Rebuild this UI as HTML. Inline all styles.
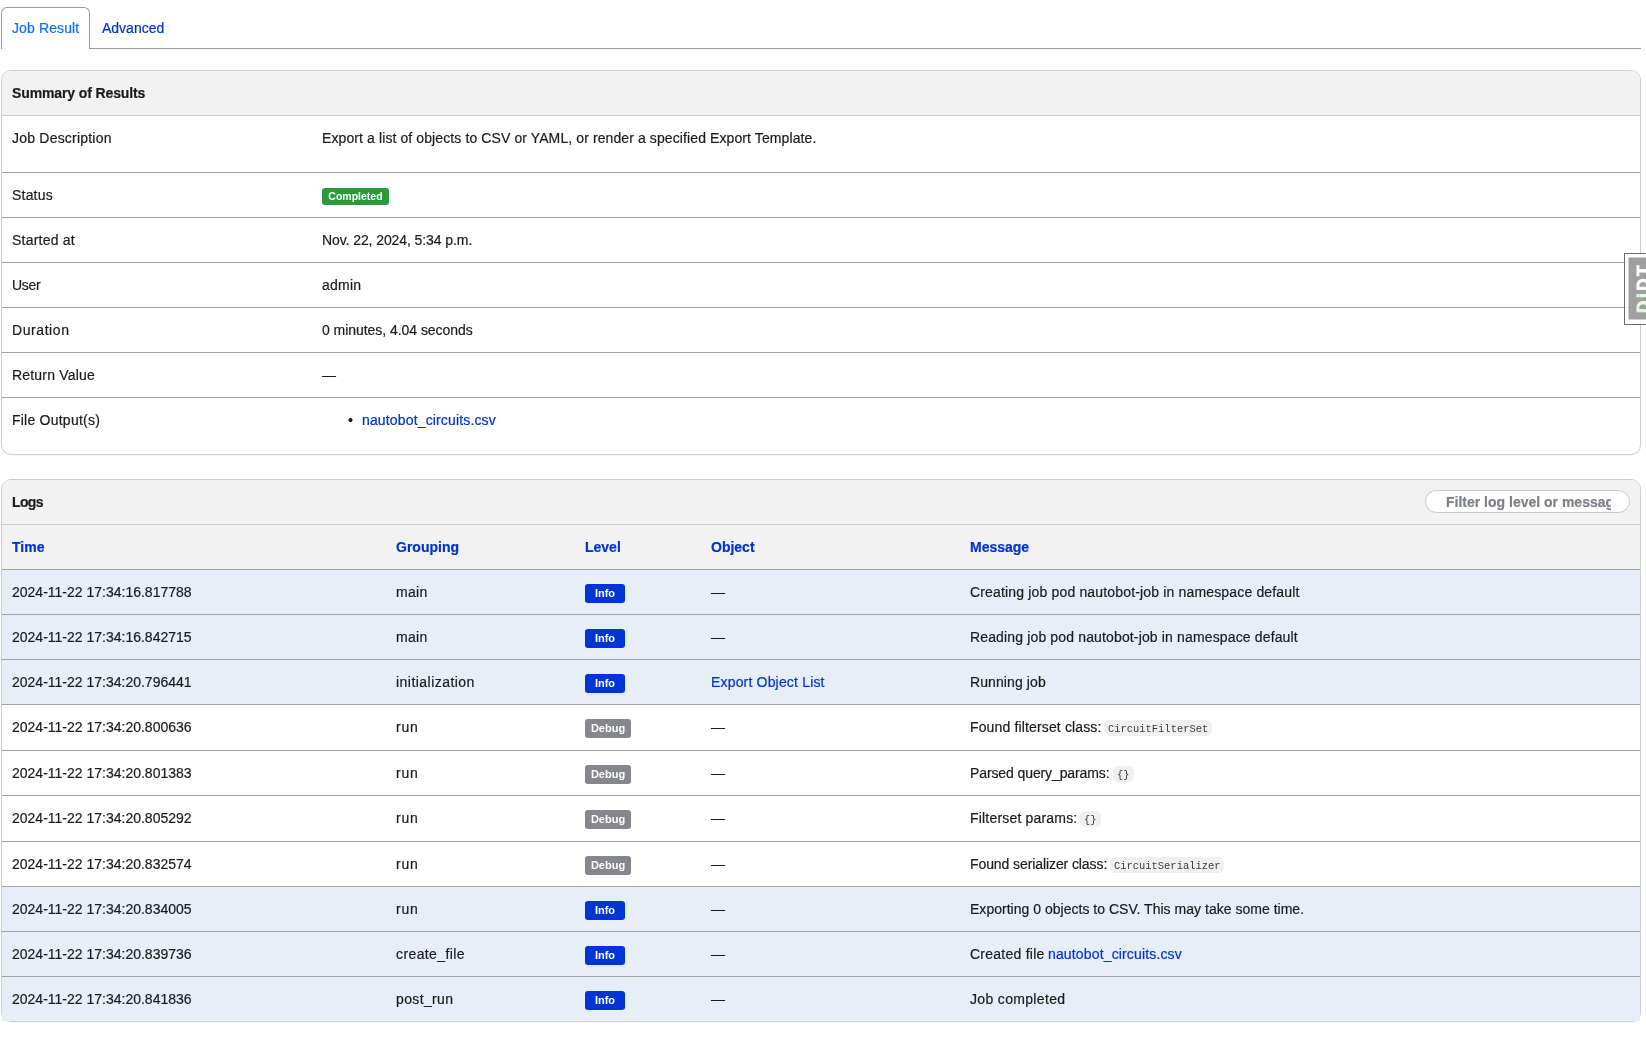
<!DOCTYPE html>
<html><head><meta charset="utf-8"><title>Job Result</title><style>
*{box-sizing:border-box}
html,body{margin:0;padding:0;background:#fff}
body{width:1646px;height:1044px;overflow:hidden;position:relative;font-family:"Liberation Sans",sans-serif;font-size:14px;line-height:20px;color:#1b1b1b}
a{color:#0033cc;text-decoration:none}
.tab{position:absolute;left:1px;top:7px;width:89px;height:42px;border:1px solid #9a9a9a;border-bottom:0;border-radius:6px 6px 0 0;background:#fff}
.tabline{position:absolute;left:89px;top:48px;width:1552px;height:1px;background:#9a9a9a}
.t{position:absolute;white-space:pre;-webkit-text-stroke:0.2px currentColor}
.aa{position:absolute;left:0;top:0;width:1646px;height:1044px;will-change:transform}
.panel{position:absolute;left:1px;width:1640px;border:1px solid #cfcfcf;border-radius:10px;overflow:hidden;background:#fff;box-shadow:0 1px 1px rgba(0,0,0,.05)}
.ph{position:absolute;left:0;top:0;width:100%;height:45px;background:#f2f2f2;border-bottom:1px solid #cfcfcf}
.row{position:absolute;left:0;width:100%}
.rl{position:absolute;left:0;width:100%;height:1px;background:#a3a3a3}
.badge{position:absolute;font-weight:bold;color:#fff;border-radius:3px;text-align:center;white-space:pre}
.code{position:absolute;font-family:"Liberation Mono",monospace;font-size:10.45px;line-height:15px;padding:2px 4px 0 4px;height:16px;background:#f0f0f0;border-radius:5px;color:#3a3a3a;white-space:pre}
.djdt{position:absolute;left:1623.5px;top:252.5px;width:40px;height:72.5px;border:1.5px solid #6a6a6a;background:rgba(255,255,255,.8)}
</style></head>
<body><div class="aa">
<div class="tab"></div><div class="tabline"></div><div class="t" style="left:12px;top:18px;letter-spacing:0.111px;color:#0a72ff;">Job Result</div><div class="t" style="left:102px;top:18px;"><a>Advanced</a></div><div class="panel" style="top:70px;height:385px"><div class="ph"></div><div class="t" style="left:10px;top:12px;font-weight:bold;letter-spacing:-0.118px;">Summary of Results</div><div class="t" style="left:10px;top:57px;letter-spacing:0.214px;">Job Description</div><div class="t" style="left:320px;top:57px;letter-spacing:0.103px;">Export a list of objects to CSV or YAML, or render a specified Export Template.</div><div class="t" style="left:10px;top:114px;letter-spacing:0.200px;">Status</div><div class="rl" style="top:101px"></div><div class="t" style="left:10px;top:159px;letter-spacing:0.222px;">Started at</div><div class="t" style="left:320px;top:159px;letter-spacing:-0.087px;">Nov. 22, 2024, 5:34 p.m.</div><div class="rl" style="top:146px"></div><div class="t" style="left:10px;top:204px;letter-spacing:-0.333px;">User</div><div class="t" style="left:320px;top:204px;letter-spacing:0.250px;">admin</div><div class="rl" style="top:191px"></div><div class="t" style="left:10px;top:249px;letter-spacing:0.571px;">Duration</div><div class="t" style="left:320px;top:249px;letter-spacing:-0.045px;">0 minutes, 4.04 seconds</div><div class="rl" style="top:236px"></div><div class="t" style="left:10px;top:294px;letter-spacing:0.182px;">Return Value</div><div class="t" style="left:320px;top:294px;">&mdash;</div><div class="rl" style="top:281px"></div><div class="t" style="left:10px;top:339px;letter-spacing:0.231px;">File Output(s)</div><div class="rl" style="top:326px"></div><div class="badge" style="left:320px;top:117px;width:67px;height:17px;line-height:17px;font-size:10.5px;background:#2a9a3c">Completed</div><div class="t" style="left:346px;top:339px">&bull;</div><div class="t" style="left:360px;top:339px;letter-spacing:0.150px;"><a>nautobot_circuits.csv</a></div></div><div class="panel" style="top:479px;height:543px;overflow:visible"><div class="ph" style="border-radius:9px 9px 0 0"></div><div class="t" style="left:10px;top:12px;font-weight:bold;letter-spacing:-0.667px;">Logs</div><div style="position:absolute;left:1423px;top:10px;width:205px;height:23px;border:1px solid #c8c8c8;border-radius:12px;background:#fff"></div><div class="t" style="left:1444px;top:12px;width:165px;overflow:hidden;font-weight:bold;color:#7d8087">Filter log level or message</div><div class="row" style="top:45px;height:44px;background:#f2f2f2"></div><div class="t" style="left:10px;top:57px;font-weight:bold;"><a>Time</a></div><div class="t" style="left:394px;top:57px;font-weight:bold;"><a>Grouping</a></div><div class="t" style="left:583px;top:57px;font-weight:bold;"><a>Level</a></div><div class="t" style="left:709px;top:57px;font-weight:bold;"><a>Object</a></div><div class="t" style="left:968px;top:57px;font-weight:bold;"><a>Message</a></div><div class="row" style="top:89px;height:46px;background:#e7eef8;border-top:1px solid #a3a3a3"></div><div class="t" style="left:10px;top:102px;">2024-11-22 17:34:16.817788</div><div class="t" style="left:394px;top:102px;letter-spacing:0.333px;">main</div><div class="badge" style="left:583px;top:104px;width:40px;height:19px;line-height:19px;font-size:11px;background:#0035d4">Info</div><div class="t" style="left:709px;top:102px;">&mdash;</div><div class="t" style="left:968px;top:102px;letter-spacing:0.163px;">Creating job pod nautobot-job in namespace default</div><div class="row" style="top:134px;height:46px;background:#e7eef8;border-top:1px solid #a3a3a3"></div><div class="t" style="left:10px;top:147px;">2024-11-22 17:34:16.842715</div><div class="t" style="left:394px;top:147px;letter-spacing:0.333px;">main</div><div class="badge" style="left:583px;top:149px;width:40px;height:19px;line-height:19px;font-size:11px;background:#0035d4">Info</div><div class="t" style="left:709px;top:147px;">&mdash;</div><div class="t" style="left:968px;top:147px;letter-spacing:0.146px;">Reading job pod nautobot-job in namespace default</div><div class="row" style="top:179px;height:46px;background:#e7eef8;border-top:1px solid #a3a3a3"></div><div class="t" style="left:10px;top:192px;">2024-11-22 17:34:20.796441</div><div class="t" style="left:394px;top:192px;letter-spacing:0.462px;">initialization</div><div class="badge" style="left:583px;top:194px;width:40px;height:19px;line-height:19px;font-size:11px;background:#0035d4">Info</div><div class="t" style="left:709px;top:192px;letter-spacing:0.176px;"><a>Export Object List</a></div><div class="t" style="left:968px;top:192px;letter-spacing:0.100px;">Running job</div><div class="row" style="top:224px;height:47px;background:#fff;border-top:1px solid #a3a3a3"></div><div class="t" style="left:10px;top:237px;">2024-11-22 17:34:20.800636</div><div class="t" style="left:394px;top:237px;letter-spacing:0.750px;">run</div><div class="badge" style="left:583px;top:239px;width:46px;height:19px;line-height:19px;font-size:11px;background:#85878c">Debug</div><div class="t" style="left:709px;top:237px;">&mdash;</div><div class="t" style="left:968px;top:237px;letter-spacing:0.143px;">Found filterset class:</div><div class="code" style="left:1102px;top:240px">CircuitFilterSet</div><div class="row" style="top:270px;height:46px;background:#fff;border-top:1px solid #a3a3a3"></div><div class="t" style="left:10px;top:283px;">2024-11-22 17:34:20.801383</div><div class="t" style="left:394px;top:283px;letter-spacing:0.750px;">run</div><div class="badge" style="left:583px;top:285px;width:46px;height:19px;line-height:19px;font-size:11px;background:#85878c">Debug</div><div class="t" style="left:709px;top:283px;">&mdash;</div><div class="t" style="left:968px;top:283px;letter-spacing:-0.105px;">Parsed query_params:</div><div class="code" style="left:1111px;top:286px">{}</div><div class="row" style="top:315px;height:47px;background:#fff;border-top:1px solid #a3a3a3"></div><div class="t" style="left:10px;top:328px;">2024-11-22 17:34:20.805292</div><div class="t" style="left:394px;top:328px;letter-spacing:0.750px;">run</div><div class="badge" style="left:583px;top:330px;width:46px;height:19px;line-height:19px;font-size:11px;background:#85878c">Debug</div><div class="t" style="left:709px;top:328px;">&mdash;</div><div class="t" style="left:968px;top:328px;letter-spacing:0.188px;">Filterset params:</div><div class="code" style="left:1078px;top:331px">{}</div><div class="row" style="top:361px;height:46px;background:#fff;border-top:1px solid #a3a3a3"></div><div class="t" style="left:10px;top:374px;">2024-11-22 17:34:20.832574</div><div class="t" style="left:394px;top:374px;letter-spacing:0.750px;">run</div><div class="badge" style="left:583px;top:376px;width:46px;height:19px;line-height:19px;font-size:11px;background:#85878c">Debug</div><div class="t" style="left:709px;top:374px;">&mdash;</div><div class="t" style="left:968px;top:374px;letter-spacing:-0.091px;">Found serializer class:</div><div class="code" style="left:1108px;top:377px">CircuitSerializer</div><div class="row" style="top:406px;height:46px;background:#e7eef8;border-top:1px solid #a3a3a3"></div><div class="t" style="left:10px;top:419px;">2024-11-22 17:34:20.834005</div><div class="t" style="left:394px;top:419px;letter-spacing:0.750px;">run</div><div class="badge" style="left:583px;top:421px;width:40px;height:19px;line-height:19px;font-size:11px;background:#0035d4">Info</div><div class="t" style="left:709px;top:419px;">&mdash;</div><div class="t" style="left:968px;top:419px;letter-spacing:0.020px;">Exporting 0 objects to CSV. This may take some time.</div><div class="row" style="top:451px;height:46px;background:#e7eef8;border-top:1px solid #a3a3a3"></div><div class="t" style="left:10px;top:464px;">2024-11-22 17:34:20.839736</div><div class="t" style="left:394px;top:464px;letter-spacing:0.400px;">create_file</div><div class="badge" style="left:583px;top:466px;width:40px;height:19px;line-height:19px;font-size:11px;background:#0035d4">Info</div><div class="t" style="left:709px;top:464px;">&mdash;</div><div class="t" style="left:968px;top:464px;letter-spacing:0.245px;">Created file</div><div class="t" style="left:1046px;top:464px;letter-spacing:0.150px;"><a>nautobot_circuits.csv</a></div><div class="row" style="top:496px;height:45px;background:#e7eef8;border-top:1px solid #a3a3a3"></div><div class="t" style="left:10px;top:509px;">2024-11-22 17:34:20.841836</div><div class="t" style="left:394px;top:509px;letter-spacing:0.357px;">post_run</div><div class="badge" style="left:583px;top:511px;width:40px;height:19px;line-height:19px;font-size:11px;background:#0035d4">Info</div><div class="t" style="left:709px;top:509px;">&mdash;</div><div class="t" style="left:968px;top:509px;letter-spacing:0.333px;">Job completed</div></div><div class="djdt"></div><svg style="position:absolute;left:1628px;top:257px;opacity:.85" width="18" height="63"><rect x="0.5" y="0.5" width="20" height="62" fill="#8f8f8f"/><g transform="translate(20.5,56) rotate(-90)" font-family="Liberation Sans" font-weight="bold" font-size="17" letter-spacing="2.6" stroke-width="0.9"><text x="0" y="0"><tspan fill="#e4fad6" stroke="#e4fad6">Dj</tspan><tspan fill="#fff" stroke="#fff">DT</tspan></text></g></svg>
</div></body></html>
